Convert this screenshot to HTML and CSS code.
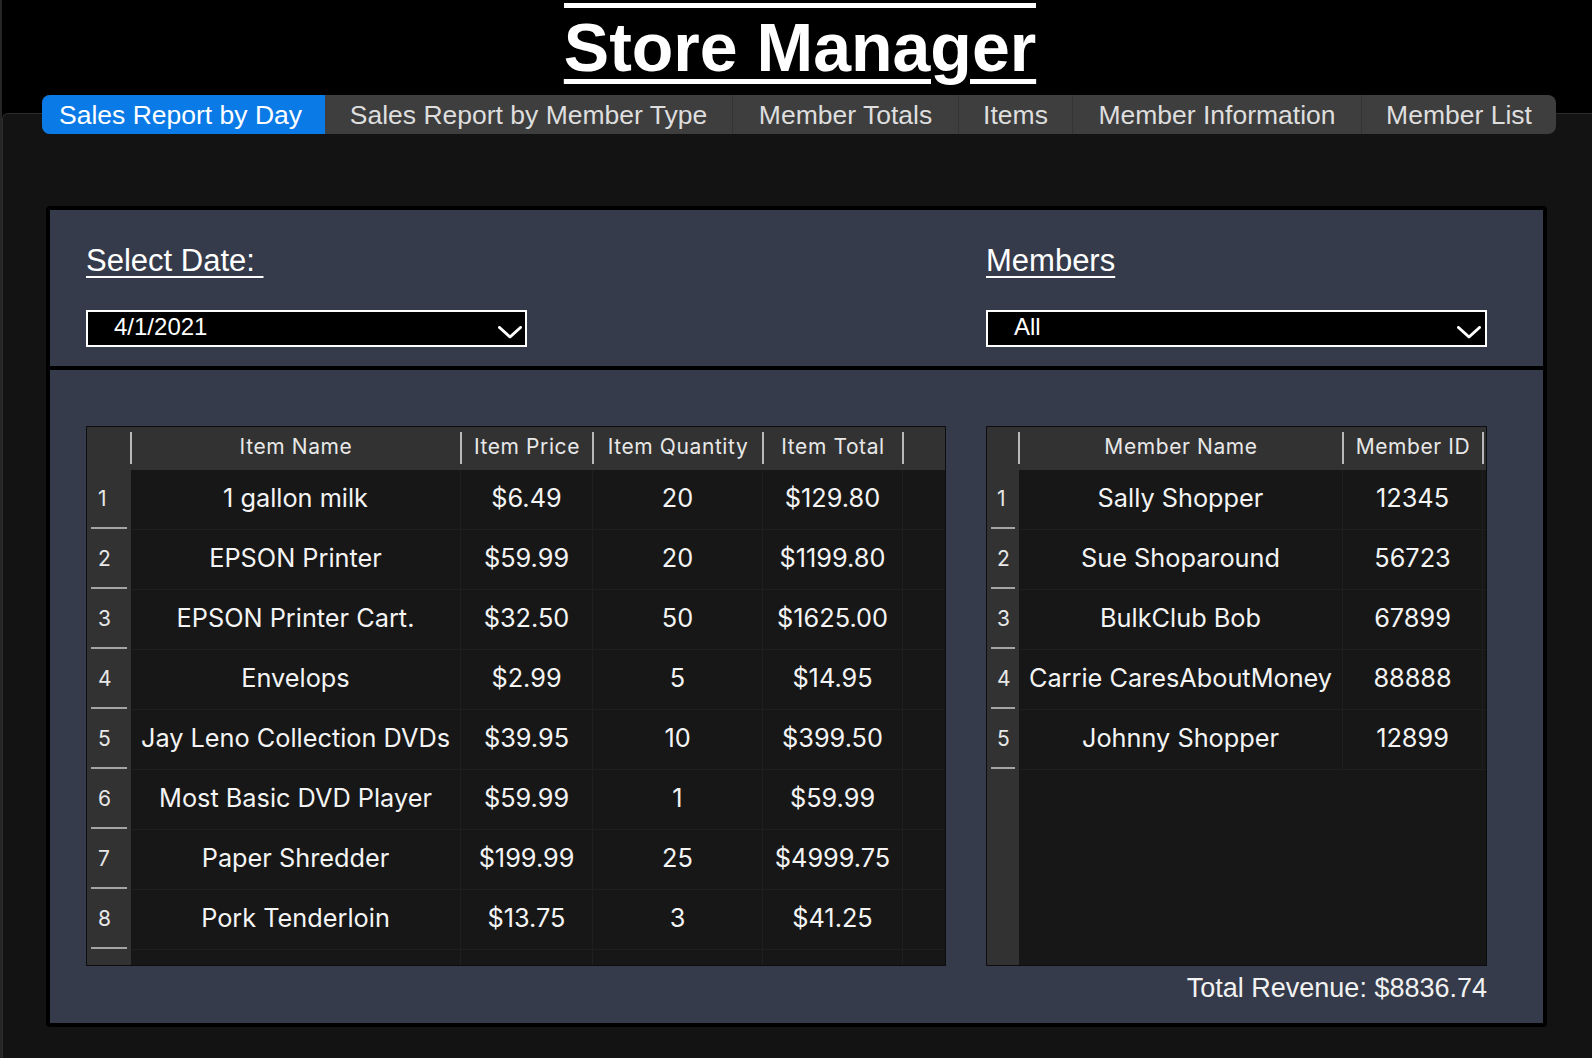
FILE: index.html
```html
<!DOCTYPE html>
<html lang="en">
<head>
<meta charset="utf-8">
<title>Store Manager</title>
<link rel="stylesheet" href="styles.css">
</head>
<body>
<div class="page">
  <h1 class="title"><span>Store Manager</span></h1>
  <nav class="tabs">
    <div class="tab active">Sales Report by Day</div>
    <div class="tab">Sales Report by Member Type</div>
    <div class="tab">Member Totals</div>
    <div class="tab">Items</div>
    <div class="tab">Member Information</div>
    <div class="tab">Member List</div>
  </nav>
  <main class="panel">
    <section class="card">
      <div class="filters">
        <div class="field">
          <div class="label"><span>Select Date:&nbsp;</span></div>
          <div class="select select-date">
            <span class="select-value">4/1/2021</span>
            <svg class="chev" width="24" height="13" viewBox="0 0 24 13"><polyline points="1.5,1.5 12,11 22.5,1.5" fill="none" stroke="#fff" stroke-width="3" stroke-linecap="round" stroke-linejoin="round"/></svg>
          </div>
        </div>
        <div class="field">
          <div class="label"><span>Members</span></div>
          <div class="select select-member">
            <span class="select-value">All</span>
            <svg class="chev" width="24" height="13" viewBox="0 0 24 13"><polyline points="1.5,1.5 12,11 22.5,1.5" fill="none" stroke="#fff" stroke-width="3" stroke-linecap="round" stroke-linejoin="round"/></svg>
          </div>
        </div>
      </div>
      <div class="results">
        <div class="grid items">
          <div class="tr thead">
            <div class="th sep"></div>
            <div class="th sep">Item Name</div>
            <div class="th sep">Item Price</div>
            <div class="th sep">Item Quantity</div>
            <div class="th sep">Item Total</div>
            <div class="th"></div>
          </div>
          <div class="tr"><div class="rn">1</div><div class="td">1 gallon milk</div><div class="td">$6.49</div><div class="td">20</div><div class="td">$129.80</div><div class="td end"></div></div>
          <div class="tr"><div class="rn">2</div><div class="td">EPSON Printer</div><div class="td">$59.99</div><div class="td">20</div><div class="td">$1199.80</div><div class="td end"></div></div>
          <div class="tr"><div class="rn">3</div><div class="td">EPSON Printer Cart.</div><div class="td">$32.50</div><div class="td">50</div><div class="td">$1625.00</div><div class="td end"></div></div>
          <div class="tr"><div class="rn">4</div><div class="td">Envelops</div><div class="td">$2.99</div><div class="td">5</div><div class="td">$14.95</div><div class="td end"></div></div>
          <div class="tr"><div class="rn">5</div><div class="td">Jay Leno Collection DVDs</div><div class="td">$39.95</div><div class="td">10</div><div class="td">$399.50</div><div class="td end"></div></div>
          <div class="tr"><div class="rn">6</div><div class="td">Most Basic DVD Player</div><div class="td">$59.99</div><div class="td">1</div><div class="td">$59.99</div><div class="td end"></div></div>
          <div class="tr"><div class="rn">7</div><div class="td">Paper Shredder</div><div class="td">$199.99</div><div class="td">25</div><div class="td">$4999.75</div><div class="td end"></div></div>
          <div class="tr"><div class="rn">8</div><div class="td">Pork Tenderloin</div><div class="td">$13.75</div><div class="td">3</div><div class="td">$41.25</div><div class="td end"></div></div>
          <div class="tr fill"><div class="rn-empty"></div><div class="td"></div><div class="td"></div><div class="td"></div><div class="td"></div><div class="td end"></div></div>
        </div>
        <div class="side">
          <div class="grid members">
            <div class="tr thead">
              <div class="th sep"></div>
              <div class="th sep">Member Name</div>
              <div class="th sep">Member ID</div>
              <div class="th"></div>
            </div>
            <div class="tr"><div class="rn">1</div><div class="td">Sally Shopper</div><div class="td">12345</div><div class="td end"></div></div>
            <div class="tr"><div class="rn">2</div><div class="td">Sue Shoparound</div><div class="td">56723</div><div class="td end"></div></div>
            <div class="tr"><div class="rn">3</div><div class="td">BulkClub Bob</div><div class="td">67899</div><div class="td end"></div></div>
            <div class="tr"><div class="rn">4</div><div class="td">Carrie CaresAboutMoney</div><div class="td">88888</div><div class="td end"></div></div>
            <div class="tr"><div class="rn">5</div><div class="td">Johnny Shopper</div><div class="td">12899</div><div class="td end"></div></div>
          </div>
          <div class="total">Total Revenue: $8836.74</div>
        </div>
      </div>
    </section>
  </main>
</div>
</body>
</html>
```

FILE: styles.css
```css
html, body {
  margin: 0;
  padding: 0;
  background: #000;
  height: 1058px;
  overflow: hidden;
}

.page {
  border-left: 2px solid #262626;
  min-height: 1058px;
  font-family: "Liberation Sans", Arial, sans-serif;
  color: #fff;
}

.title {
  margin: 0;
  padding: 3px 0 0 6px;
  text-align: center;
  font-family: "Liberation Sans", Arial, sans-serif;
  font-weight: bold;
  font-size: 68px;
  line-height: 79px;
  color: #fff;
}

.title span {
  display: inline-block;
  border-top: 5px solid #fff;
  text-decoration: underline;
  text-decoration-thickness: 5px;
  text-underline-offset: 8px;
}

.tabs {
  position: relative;
  z-index: 1;
  display: flex;
  width: 1514px;
  height: 39px;
  margin: 8px 0 0 40px;
  background: #3e3e3e;
  border-radius: 8px;
  overflow: hidden;
}

.tab {
  flex: none;
  box-sizing: border-box;
  padding: 2px 0 0;
  text-align: center;
  white-space: nowrap;
  font-size: 26.5px;
  line-height: 37px;
  color: #dedede;
  border-left: 1px solid #343434;
}

.tab:nth-child(1) { width: 283px; padding-right: 6px; }
.tab:nth-child(2) { width: 407px; }
.tab:nth-child(3) { width: 226px; }
.tab:nth-child(4) { width: 114px; }
.tab:nth-child(5) { width: 289px; }
.tab:nth-child(6) { width: 195px; }

.tab.active {
  background: #0a7ae6;
  color: #fff;
  border-left: 0;
}

.tab.active + .tab {
  border-left: 0;
}

.panel {
  display: block;
  margin: -21px -20px 0 0;
  padding: 92px 0 80px 43px;
  background: #131313;
  border: 1px solid #2c2c2c;
  border-right: 0;
  border-radius: 6px 0 0 0;
}

.card {
  width: 1501px;
  box-sizing: border-box;
  border: 4px solid #000;
  border-radius: 4px;
  background: #353b4b;
}

.filters,
.results {
  display: grid;
  grid-template-columns: 860px 501px;
  column-gap: 40px;
  padding-left: 36px;
}

.filters {
  padding-top: 33px;
  padding-bottom: 19px;
  border-bottom: 4px solid #000;
}

.results {
  padding-top: 56px;
  padding-bottom: 19px;
}

.label {
  font-size: 31px;
  line-height: 36px;
  color: #fff;
}

.label span {
  text-decoration: underline;
  text-decoration-thickness: 2px;
  text-underline-offset: 5px;
}

.select {
  display: flex;
  margin-top: 31px;
  height: 37px;
  box-sizing: border-box;
  border: 2px solid #fff;
  background: #000;
  padding: 0 3px 0 26px;
  font-size: 24px;
  line-height: 30px;
  color: #fff;
}

.select-date {
  width: 441px;
}

.select-member {
  padding-right: 4px;
}

.chev {
  margin-left: auto;
  margin-top: 14px;
  align-self: flex-start;
}

/* tables */
.grid {
  height: 540px;
  box-sizing: border-box;
  border: 1px solid #0d0d0d;
  display: flex;
  flex-direction: column;
  font-family: Inter, "Noto Sans", sans-serif;
}

.grid.items {
  background: linear-gradient(to right, #323232 0, #323232 44px, #171717 44px);
}

.grid.members {
  background: linear-gradient(to right, #323232 0, #323232 32px, #171717 32px);
}

.items .tr {
  display: grid;
  grid-template-columns: 44px 330px 132px 170px 140px 42px;
}

.members .tr {
  display: grid;
  grid-template-columns: 32px 324px 140px 3px;
}

.tr.fill {
  flex: 1;
}

.thead {
  height: 43px;
  background: #323232;
}

.th {
  position: relative;
  text-align: center;
  font-size: 21px;
  letter-spacing: 0.6px;
  line-height: 40px;
  color: #e8e8e8;
  white-space: nowrap;
}

.th.sep::after {
  content: "";
  position: absolute;
  right: -1px;
  top: 5px;
  bottom: 6px;
  width: 2px;
  background: #b8b8b8;
}

.td {
  height: 60px;
  box-sizing: border-box;
  text-align: center;
  white-space: nowrap;
  font-size: 25.3px;
  line-height: 55px;
  color: #f4f4f4;
  border-right: 1px solid #1f1f1f;
  border-bottom: 1px solid #1f1f1f;
}

.td.end {
  border-right: 0;
}

.fill .td {
  height: auto;
  border-bottom: 0;
}

.rn {
  position: relative;
  height: 60px;
  padding-left: 11px;
  font-size: 21px;
  line-height: 58px;
  color: #e8e8e8;
}

.members .rn {
  padding-left: 10px;
}

.rn::after {
  content: "";
  position: absolute;
  left: 4px;
  right: 4px;
  bottom: 1px;
  height: 2px;
  background: #a4a4a4;
}

.total {
  margin-top: 6px;
  text-align: right;
  font-size: 27px;
  line-height: 32px;
  color: #f2f2f2;
}
```
